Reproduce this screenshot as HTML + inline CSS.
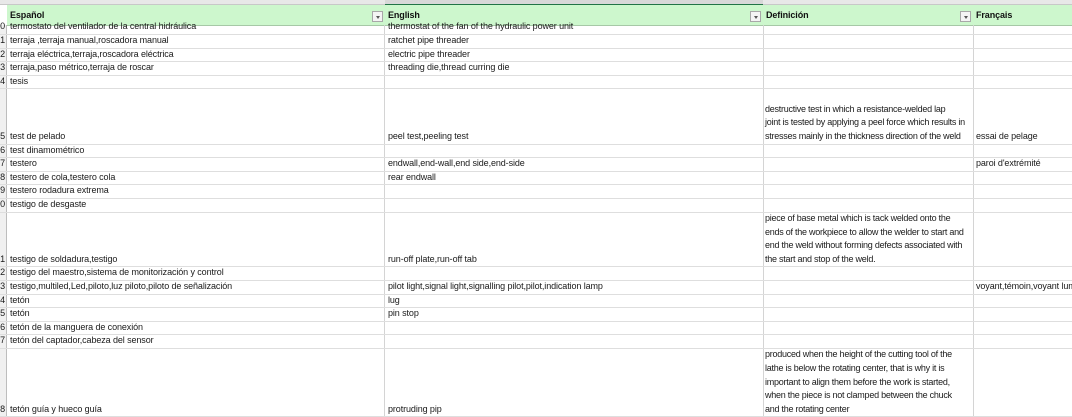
<!DOCTYPE html>
<html><head><meta charset="utf-8"><style>
body{margin:0;width:1072px;height:417px;overflow:hidden;background:#fff;font-family:"Liberation Sans",sans-serif;font-size:9px;color:#1a1a1a;letter-spacing:-0.1px;position:relative}
.top{position:absolute;left:0;top:0;width:1072px;height:4px;background:#e8e8e8;border-bottom:1px solid #c8c8c8}
.sel{position:absolute;left:385px;top:0;width:378px;height:4px;background:#d8d8d8;border-bottom:1px solid #217346}
.hdr{position:absolute;left:7px;top:5px;width:1065px;height:20px;background:#cdf7cd;border-bottom:1px solid #a6c8a6}
.h{position:absolute;top:5px;height:20px;line-height:20px;font-weight:bold;font-size:9px;color:#111}
.fb{position:absolute;top:11px;width:11px;height:11px;border:1px solid #a8a8a8;background:#f4f4f4;box-sizing:border-box}
.fb:after{content:"";position:absolute;left:3px;top:4px;border-left:2px solid transparent;border-right:2px solid transparent;border-top:3px solid #555}
.vl{position:absolute;top:25px;height:392px;width:1px;background:#d4d4d4}
.hl{position:absolute;left:0;width:1072px;height:1px;background:#dedede}
.c{position:absolute;white-space:nowrap;line-height:13.6px}
.d{letter-spacing:-0.25px}
.rn{position:absolute;left:-3px;width:8px;text-align:right;line-height:13.6px}
.rncol{position:absolute;left:0;top:25px;width:6px;height:392px;background:#f0f0f0;border-right:1px solid #bdbdbd}
</style></head><body>
<div class="top"></div><div class="sel"></div>
<div class="rncol"></div>
<div class="hdr"></div>
<div class="h" style="left:10px">Español</div>
<div class="h" style="left:388px">English</div>
<div class="h" style="left:766px">Definición</div>
<div class="h" style="left:976px">Français</div>
<div class="fb" style="left:372px"></div>
<div class="fb" style="left:750px"></div>
<div class="fb" style="left:960px"></div>
<div class="vl" style="left:384px"></div>
<div class="vl" style="left:763px"></div>
<div class="vl" style="left:973px"></div>
<div id="g"></div>
<script>
var rows=[
[34,"0","termostato del ventilador de la central hidráulica","thermostat of the fan of the hydraulic power unit","",""],
[47.6,"1","terraja ,terraja manual,roscadora manual","ratchet pipe threader","",""],
[61.2,"2","terraja eléctrica,terraja,roscadora eléctrica","electric pipe threader","",""],
[74.8,"3","terraja,paso métrico,terraja de roscar","threading die,thread curring die","",""],
[88.4,"4","tesis","","",""],
[143.6,"5","test de pelado","peel test,peeling test","destructive test in which a resistance-welded lap<br>joint is tested by applying a peel force which results in<br>stresses mainly in the thickness direction of the weld","essai de pelage"],
[157.2,"6","test dinamométrico","","",""],
[170.8,"7","testero","endwall,end-wall,end side,end-side","","paroi d'extrémité"],
[184.4,"8","testero de cola,testero cola","rear endwall","",""],
[198,"9","testero rodadura extrema","","",""],
[211.6,"0","testigo de desgaste","","",""],
[266.4,"1","testigo de soldadura,testigo","run-off plate,run-off tab","piece of base metal which is tack welded onto the<br>ends of the workpiece to allow the welder to start and<br>end the weld without forming defects associated with<br>the start and stop of the weld.",""],
[280,"2","testigo del maestro,sistema de monitorización y control","","",""],
[293.6,"3","testigo,multiled,Led,piloto,luz piloto,piloto de señalización","pilot light,signal light,signalling pilot,pilot,indication lamp","","voyant,témoin,voyant lum"],
[307.2,"4","tetón","lug","",""],
[320.8,"5","tetón","pin stop","",""],
[334.4,"6","tetón de la manguera de conexión","","",""],
[348,"7","tetón del captador,cabeza del sensor","","",""],
[416.4,"8","tetón guía y hueco guía","protruding pip","produced when the height of the cutting tool of the<br>lathe is below the rotating center, that is why it is<br>important to align them before the work is started,<br>when the piece is not clamped between the chuck<br>and the rotating center",""]
];
var h="";
rows.forEach(function(r){
 var b=r[0];
 h+='<div class="hl" style="top:'+b+'px"></div>';
 var t=(b-13.6).toFixed(1);
 h+='<div class="rn" style="top:'+t+'px">'+r[1]+'</div>';
 h+='<div class="c" style="left:10px;top:'+t+'px">'+r[2]+'</div>';
 h+='<div class="c" style="left:388px;top:'+t+'px">'+r[3]+'</div>';
 if(r[4]){h+='<div class="c d" style="left:765px;bottom:'+(417-b)+'px">'+r[4]+'</div>';}
 h+='<div class="c" style="left:976px;top:'+t+'px">'+r[5]+'</div>';
});
document.getElementById("g").innerHTML=h;
</script>
</body></html>
